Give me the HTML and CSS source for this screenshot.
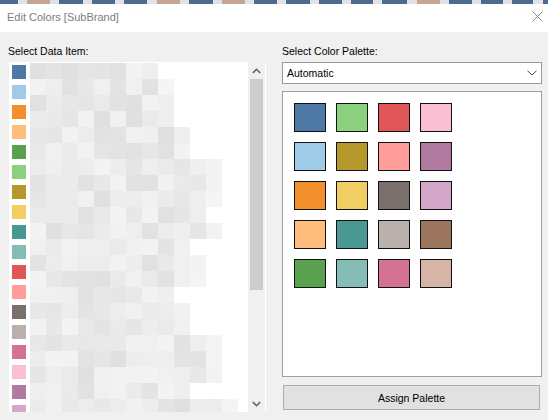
FILE: index.html
```html
<!DOCTYPE html>
<html>
<head>
<meta charset="utf-8">
<title>Edit Colors</title>
<link rel="stylesheet" href="styles.css">
</head>
<body>
<div class="strip">
  <svg width="548" height="4" viewBox="0 0 548 4">
    <rect x="0" y="0" width="548" height="4" fill="#4d6a8f"/>
    <rect x="27" y="0" width="23" height="4" fill="#c7a494"/>
    <rect x="157" y="0" width="23" height="4" fill="#c7a494"/>
    <rect x="222" y="0" width="23" height="4" fill="#c7a494"/>
    <rect x="417" y="0" width="23" height="4" fill="#c7a494"/>
    <g fill="#dfe3e8">
      <rect x="18" y="0" width="9" height="4"/>
      <rect x="50" y="0" width="9" height="4"/>
      <rect x="83" y="0" width="9" height="4"/>
      <rect x="115" y="0" width="9" height="4"/>
      <rect x="147" y="0" width="10" height="4"/>
      <rect x="180" y="0" width="9" height="4"/>
      <rect x="213" y="0" width="9" height="4"/>
      <rect x="245" y="0" width="9" height="4"/>
      <rect x="277" y="0" width="9" height="4"/>
      <rect x="310" y="0" width="9" height="4"/>
      <rect x="342" y="0" width="9" height="4"/>
      <rect x="373" y="0" width="9" height="4"/>
      <rect x="407" y="0" width="10" height="4"/>
      <rect x="440" y="0" width="9" height="4"/>
      <rect x="472" y="0" width="9" height="4"/>
      <rect x="503" y="0" width="9" height="4"/>
      <rect x="533" y="0" width="10" height="4"/>
    </g>
  </svg>
</div>
<header class="titlebar">
  <span class="title">Edit Colors [SubBrand]</span>
  <svg class="close" width="11" height="11" viewBox="0 0 11 11">
    <path d="M0.5 0.5 L10.5 10.5 M10.5 0.5 L0.5 10.5" stroke="#8a8a8a" stroke-width="1" fill="none"/>
  </svg>
</header>
<main class="main">
  <section class="col left">
    <div class="label">Select Data Item:</div>
    <div class="listbox">
      <div class="items">
        <div class="item"><span class="sw c1"></span></div>
        <div class="item"><span class="sw c2"></span></div>
        <div class="item"><span class="sw c3"></span></div>
        <div class="item"><span class="sw c4"></span></div>
        <div class="item"><span class="sw c5"></span></div>
        <div class="item"><span class="sw c6"></span></div>
        <div class="item"><span class="sw c7"></span></div>
        <div class="item"><span class="sw c8"></span></div>
        <div class="item"><span class="sw c9"></span></div>
        <div class="item"><span class="sw c10"></span></div>
        <div class="item"><span class="sw c11"></span></div>
        <div class="item"><span class="sw c12"></span></div>
        <div class="item"><span class="sw c13"></span></div>
        <div class="item"><span class="sw c14"></span></div>
        <div class="item"><span class="sw c15"></span></div>
        <div class="item"><span class="sw c16"></span></div>
        <div class="item"><span class="sw c17"></span></div>
        <div class="item"><span class="sw c18"></span></div>
      </div>
      <svg class="blur" id="blur" width="227" height="349" viewBox="0 0 227 349"></svg>
      <div class="scrollbar">
        <div class="sb-btn">
          <svg width="9" height="6" viewBox="0 0 9 6"><polyline points="0.8,5 4.5,1.3 8.2,5" fill="none" stroke="#606060" stroke-width="1.6"/></svg>
        </div>
        <div class="sb-track"><div class="sb-thumb"></div></div>
        <div class="sb-btn">
          <svg width="9" height="6" viewBox="0 0 9 6"><polyline points="0.8,1 4.5,4.7 8.2,1" fill="none" stroke="#606060" stroke-width="1.6"/></svg>
        </div>
      </div>
    </div>
  </section>
  <section class="col right">
    <div class="label">Select Color Palette:</div>
    <div class="select">
      <span>Automatic</span>
      <svg width="10" height="6" viewBox="0 0 10 6"><polyline points="0.5,0.8 5,5 9.5,0.8" fill="none" stroke="#444" stroke-width="1"/></svg>
    </div>
    <div class="palette">
      <div class="grid">
        <span class="ps c1"></span><span class="ps c2"></span><span class="ps c3"></span><span class="ps c4"></span><span class="ps c5"></span>
        <span class="ps c6"></span><span class="ps c7"></span><span class="ps c8"></span><span class="ps c9"></span><span class="ps c10"></span>
        <span class="ps c11"></span><span class="ps c12"></span><span class="ps c13"></span><span class="ps c14"></span><span class="ps c15"></span>
        <span class="ps c16"></span><span class="ps c17"></span><span class="ps c18"></span><span class="ps c19"></span><span class="ps c20"></span>
      </div>
    </div>
    <button class="assign">Assign Palette</button>
  </section>
</main>
<script src="script.js"></script>
</body>
</html>
```

FILE: styles.css
```css
* { box-sizing: border-box; }
html, body { margin: 0; padding: 0; }
body {
  width: 548px;
  height: 420px;
  overflow: hidden;
  background: #f0f0f0;
  font-family: "Liberation Sans", Arial, sans-serif;
  font-size: 10.5px;
  color: #000;
}
.strip { height: 4px; }
.strip svg { display: block; }

.titlebar {
  height: 28px;
  background: #fff;
  display: flex;
  align-items: center;
  justify-content: space-between;
  padding: 0 5px 3px 7px;
}
.title { font-size: 11px; color: #7d7d7d; }
.close { display: block; }

.main {
  display: flex;
  gap: 15px;
  padding: 11px 6px 0 8px;
}
.col { display: flex; flex-direction: column; }
.left { width: 259px; }
.right { width: 260px; }
.label { height: 16px; line-height: 16px; }

.listbox {
  position: relative;
  margin: 3px 0 0 1px;
  width: 257px;
  height: 350px;
  background: #fff;
  display: flex;
  padding-right: 1px;
}
.items {
  flex: 1;
  display: flex;
  flex-direction: column;
  gap: 6px;
  padding: 3px 0 0 3px;
  overflow: hidden;
}
.item { flex-shrink: 0; height: 14px; }
.sw { display: block; width: 14px; height: 14px; }
.blur { position: absolute; left: 21px; top: 1px; }

.scrollbar {
  width: 17px;
  background: #f0f0f0;
  display: flex;
  flex-direction: column;
}
.sb-btn {
  height: 17px;
  display: flex;
  align-items: center;
  justify-content: center;
  flex-shrink: 0;
}
.sb-btn svg { display: block; }
.sb-track { flex: 1; padding: 0 2px; }
.sb-thumb { height: 211px; background: #cdcdcd; }

.select {
  margin-top: 3px;
  height: 22px;
  background: #fff;
  border: 1px solid #9a9a9a;
  display: flex;
  align-items: center;
  justify-content: space-between;
  padding: 0 4px 0 4px;
}
.select svg { display: block; }

.palette {
  margin-top: 7px;
  height: 286px;
  background: #fff;
  border: 1px solid #a0a0a0;
  padding: 11px;
}
.grid {
  display: grid;
  grid-auto-flow: column;
  grid-template-rows: repeat(5, 29px);
  grid-template-columns: repeat(4, 32px);
  gap: 10px;
}
.ps { display: block; border: 1px solid #111; }

.assign {
  margin: 8px 2px 0 1px;
  height: 25px;
  background: #e1e1e1;
  border: 1px solid #adadad;
  font-family: inherit;
  font-size: 10.5px;
  color: #000;
  padding: 0;
}

.c1 { background: #4e79a7; }
.c2 { background: #a0cbe8; }
.c3 { background: #f28e2b; }
.c4 { background: #ffbe7d; }
.c5 { background: #59a14f; }
.c6 { background: #8cd17d; }
.c7 { background: #b6992d; }
.c8 { background: #f1ce63; }
.c9 { background: #499894; }
.c10 { background: #86bcb6; }
.c11 { background: #e15759; }
.c12 { background: #ff9d9a; }
.c13 { background: #79706e; }
.c14 { background: #bab0ac; }
.c15 { background: #d37295; }
.c16 { background: #fabfd2; }
.c17 { background: #b07aa1; }
.c18 { background: #d4a6c8; }
.c19 { background: #9d7660; }
.c20 { background: #d7b5a6; }
```

FILE: script.js
```js
(function () {
  var svg = document.getElementById('blur');
  var ns = 'http://www.w3.org/2000/svg';
  var widths = [8, 9, 9, 9, 10, 10, 12, 12, 12, 11, 12, 10, 11, 11, 9, 10, 10, 12, 12, 12, 10, 13];
  function rnd(r, c) {
    var v = Math.sin(r * 12.9898 + c * 78.233) * 43758.5453;
    return v - Math.floor(v);
  }
  for (var r = 0; r < widths.length; r++) {
    for (var c = 0; c < widths[r]; c++) {
      var v = rnd(r, c);
      var shade;
      if (c >= widths[r] - 1) {
        shade = 238 + Math.floor(v * 8);
      } else {
        shade = 224 + Math.floor(v * 20);
      }
      var rect = document.createElementNS(ns, 'rect');
      rect.setAttribute('x', c * 16);
      rect.setAttribute('y', r * 16);
      rect.setAttribute('width', 16);
      rect.setAttribute('height', 16);
      rect.setAttribute('fill', 'rgb(' + shade + ',' + shade + ',' + shade + ')');
      svg.appendChild(rect);
    }
  }
})();
```
